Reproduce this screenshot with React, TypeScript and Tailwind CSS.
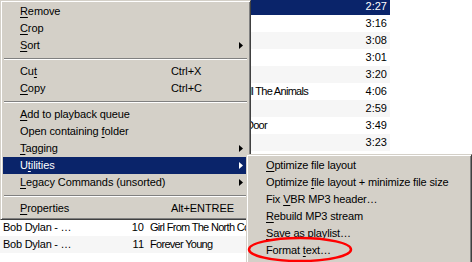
import type { ReactNode } from "react";

type Row = { artist: string; no: string; title: string; time: string };

const rows: Row[] = [
  { artist: "Bob Dylan - …", no: "1", title: "Lay Lady Lay", time: "2:27" },
  { artist: "Bob Dylan - …", no: "2", title: "Hurricane", time: "3:16" },
  { artist: "Bob Dylan - …", no: "3", title: "Isis", time: "3:08" },
  { artist: "Bob Dylan - …", no: "4", title: "Mozambique", time: "3:01" },
  { artist: "Bob Dylan - …", no: "5", title: "Sara", time: "3:20" },
  { artist: "Bob Dylan - …", no: "6", title: "Man Gave Names To All The Animals", time: "4:06" },
  { artist: "Bob Dylan - …", no: "7", title: "Oh, Sister", time: "2:59" },
  { artist: "Bob Dylan - …", no: "8", title: "Knockin' On Heaven's Door", time: "3:49" },
  { artist: "Bob Dylan - …", no: "9", title: "Durango", time: "3:23" },
  { artist: "Bob Dylan - …", no: "5", title: "Abandoned", time: "3:10" },
  { artist: "Bob Dylan - …", no: "6", title: "Dirge", time: "3:33" },
  { artist: "Bob Dylan - …", no: "7", title: "Joey", time: "4:12" },
  { artist: "Bob Dylan - …", no: "9", title: "Tangled", time: "5:41" },
  { artist: "Bob Dylan - …", no: "10", title: "Girl From The North Country", time: "3:45" },
  { artist: "Bob Dylan - …", no: "11", title: "Forever Young", time: "4:57" },
];

function Arrow({ white }: { white?: boolean }) {
  return (
    <svg width="4" height="7" viewBox="0 0 4 7" className="block shrink-0">
      <polygon points="0,0 4,3.5 0,7" fill={white ? "#ffffff" : "#000000"} />
    </svg>
  );
}

function U({ children }: { children: ReactNode }) {
  return <span className="underline underline-offset-[2px]">{children}</span>;
}

function Item({
  children,
  shortcut,
  sub,
  active,
}: {
  children: ReactNode;
  shortcut?: string;
  sub?: boolean;
  active?: boolean;
}) {
  return (
    <div
      className={`flex h-[17px] items-center pl-[17px] pr-[5px] whitespace-pre ${
        active ? "bg-[#0a246a] text-white" : "text-black"
      }`}
    >
      <span className="w-[151px] shrink-0">{children}</span>
      {shortcut && <span>{shortcut}</span>}
      {sub && (
        <span className="ml-auto">
          <Arrow white={active} />
        </span>
      )}
    </div>
  );
}

function Sep() {
  return (
    <div className="flex h-[9px] flex-col justify-center px-[1px]">
      <div className="h-px bg-[#808080]" />
      <div className="h-px bg-white" />
    </div>
  );
}

function SubItem({ children }: { children: ReactNode }) {
  return (
    <div className="flex h-[17px] items-center pl-[17px] whitespace-pre text-black">
      <span>{children}</span>
    </div>
  );
}

const bevel =
  "border border-t-[#d4d0c8] border-l-[#d4d0c8] border-r-[#404040] border-b-[#404040] bg-[#d4d0c8] p-[2px] shadow-[inset_1px_1px_0_#ffffff,inset_-1px_-1px_0_#808080]";

export default function App() {
  return (
    <div className="relative h-[262px] w-[472px] overflow-hidden bg-white font-['Liberation_Sans',Arial,sans-serif] text-[11px] text-black">
      {/* ---------- playlist behind ---------- */}
      <div className="-mt-[2px] flex w-[390px] flex-col">
        {rows.map((r, i) => (
          <div
            key={i}
            className={`flex h-[17px] items-center whitespace-nowrap ${
              i === 0
                ? "bg-[#0a246a] text-white"
                : i % 2 === 0
                ? "bg-[#f6f6f6]"
                : "bg-white"
            }`}
          >
            <span className="w-[128px] shrink-0 pl-[3px] tracking-[-0.25px]">{r.artist}</span>
            <span className="w-[16px] shrink-0 text-right">{r.no}</span>
            <span className="min-w-0 flex-1 overflow-hidden pl-[6px] tracking-[-0.7px]">{r.title}</span>
            <span className="w-[40px] shrink-0 pr-[3px] text-right">{r.time}</span>
          </div>
        ))}
      </div>

      {/* ---------- context menu ---------- */}
      <div className={`absolute left-0 top-0 w-[251px] tracking-[-0.1px] ${bevel}`}>
        <Item><U>R</U>emove</Item>
        <Item><U>C</U>rop</Item>
        <Item sub><U>S</U>ort</Item>
        <Sep />
        <Item shortcut="Ctrl+X">Cu<U>t</U></Item>
        <Item shortcut="Ctrl+C"><U>C</U>opy</Item>
        <Sep />
        <Item><U>A</U>dd to playback queue</Item>
        <Item>Open containing <U>f</U>older</Item>
        <Item sub><U>T</U>agging</Item>
        <Item sub active>U<U>t</U>ilities</Item>
        <Item sub><U>L</U>egacy Commands (unsorted)</Item>
        <Sep />
        <Item shortcut="Alt+ENTREE"><U>P</U>roperties</Item>
      </div>

      {/* ---------- Utilities submenu ---------- */}
      <div className={`absolute left-[246px] top-[154px] w-[226px] pb-[20px] tracking-[-0.15px] ${bevel}`}>
        <SubItem><U>O</U>ptimize file layout</SubItem>
        <SubItem>Optimize <U>f</U>ile layout + minimize file size</SubItem>
        <SubItem>Fix <U>V</U>BR MP3 header…</SubItem>
        <SubItem><U>R</U>ebuild MP3 stream</SubItem>
        <SubItem><U>S</U>ave as playlist…</SubItem>
        <SubItem>Format <U>t</U>ext…</SubItem>
      </div>

      {/* red annotation circle */}
      <svg className="pointer-events-none absolute left-0 top-0" width="472" height="262">
        <ellipse cx="300" cy="249.5" rx="51" ry="11.5" fill="none" stroke="#ff0000" strokeWidth="2.5" />
      </svg>
    </div>
  );
}
